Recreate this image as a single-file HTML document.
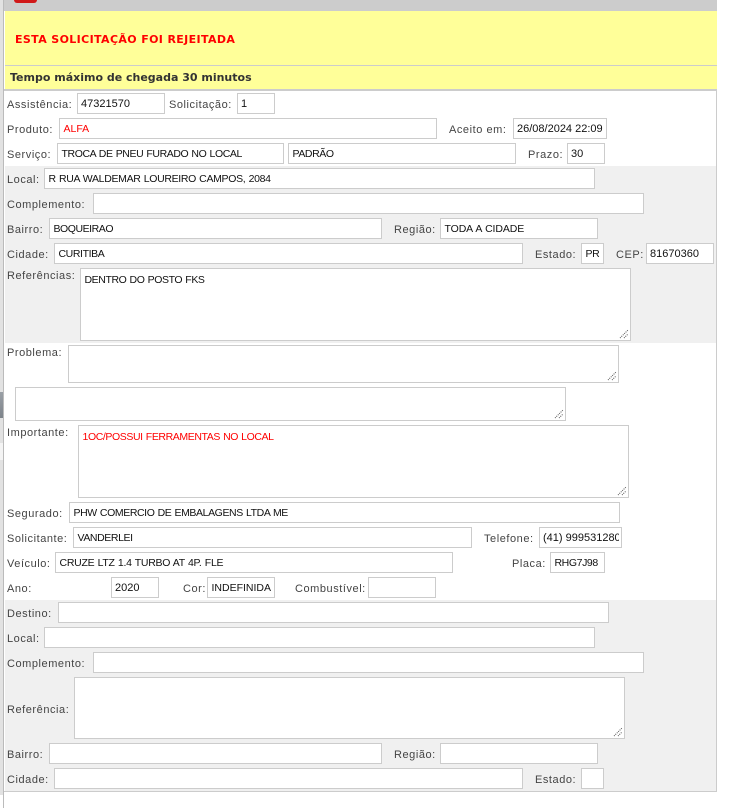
<!DOCTYPE html>
<html><head><meta charset="utf-8"><style>
html,body{margin:0;padding:0;background:#fff;width:748px;height:808px;overflow:hidden}
body{position:relative;font-family:"Liberation Sans",sans-serif;font-size:11px}
.a{position:absolute}
.l{position:absolute;color:#444;letter-spacing:.55px;line-height:14px;white-space:nowrap;margin-top:1px}
.i{position:absolute;box-sizing:border-box;background:#fff;border:1px solid #ccc;color:#111;height:21px;line-height:21px;padding-left:3px;overflow:hidden;white-space:nowrap}
.c{font-size:10.5px;letter-spacing:-.4px;word-spacing:.6px;padding-left:3.5px}
.t{line-height:14px;padding-top:4px;overflow:visible}
.r{color:#f00}
.t svg{position:absolute;right:1px;bottom:1px}
.i span{display:block;overflow:hidden}
</style></head><body>
<div class="a" style="left:0;top:0;width:3px;height:795px;background:#e2e2e2"></div>
<div class="a" style="left:0;top:443px;width:3px;height:17px;background:#f4f4f4"></div>
<div class="a" style="left:3px;top:0;width:1px;height:808px;background:#bbb"></div>
<div class="a" style="left:0;top:392px;width:3px;height:26px;background:linear-gradient(#9aa0a6,#7d838a)"></div>
<div class="a" style="left:4px;top:0;width:713px;height:11px;background:#ccc"></div>
<div class="a" style="left:14px;top:0;width:23px;height:3px;background:#d01818;border-radius:0 0 6px 6px"></div>
<div class="a" style="left:5px;top:11px;width:712px;height:54px;background:#ffff99"></div>
<div class="a" style="left:5px;top:65px;width:712px;height:1px;background:#ccc"></div>
<div class="a" style="left:5px;top:66px;width:712px;height:23px;background:#ffff99"></div>
<div class="a" style="left:4px;top:89px;width:713px;height:2px;background:#ccc"></div>
<div class="a" style="left:15px;top:33px;color:#f00;font:bold 11px/14px 'DejaVu Sans',sans-serif;letter-spacing:.37px;white-space:nowrap">ESTA SOLICITAÇÃO FOI REJEITADA</div>
<div class="a" style="left:10px;top:71px;color:#333;font:bold 11px/14px 'DejaVu Sans',sans-serif;white-space:nowrap">Tempo máximo de chegada 30 minutos</div>
<div class="a" style="left:5px;top:166px;width:711px;height:177px;background:#f0f0f0"></div>
<div class="a" style="left:5px;top:600px;width:711px;height:191px;background:#f0f0f0"></div>
<div class="a" style="left:716px;top:91px;width:1px;height:701px;background:#ccc"></div>
<div class="a" style="left:4px;top:791px;width:713px;height:1px;background:#ccc"></div>

<div class="l" style="left:7px;top:97px">Assistência:</div><div class="i" style="left:77px;top:93px;width:88px">47321570</div>
<div class="l" style="left:169px;top:97px">Solicitação:</div><div class="i" style="left:237px;top:93px;width:38px">1</div>
<div class="l" style="left:7px;top:122px">Produto:</div><div class="i r c" style="left:59px;top:118px;width:378px;letter-spacing:0">ALFA</div>
<div class="l" style="left:449px;top:122px">Aceito em:</div><div class="i" style="left:513px;top:118px;width:94px"><span style="width:86px">26/08/2024 22:09:</span></div>
<div class="l" style="left:7px;top:147px">Serviço:</div><div class="i c" style="left:57px;top:143px;width:227px">TROCA DE PNEU FURADO NO LOCAL</div><div class="i c" style="left:288px;top:143px;width:228px">PADRÃO</div>
<div class="l" style="left:528px;top:147px">Prazo:</div><div class="i" style="left:567px;top:143px;width:38px">30</div>
<div class="l" style="left:7px;top:172px">Local:</div><div class="i c" style="left:44px;top:168px;width:551px;letter-spacing:-.32px">R RUA WALDEMAR LOUREIRO CAMPOS, 2084</div>
<div class="l" style="left:7px;top:197px">Complemento:</div><div class="i" style="left:93px;top:193px;width:551px"></div>
<div class="l" style="left:7px;top:222px">Bairro:</div><div class="i c" style="left:49px;top:218px;width:333px;letter-spacing:-.45px">BOQUEIRAO</div>
<div class="l" style="left:394px;top:222px">Região:</div><div class="i c" style="left:440px;top:218px;width:158px;letter-spacing:-.1px">TODA A CIDADE</div>
<div class="l" style="left:7px;top:247px">Cidade:</div><div class="i c" style="left:54px;top:243px;width:469px">CURITIBA</div>
<div class="l" style="left:535px;top:247px">Estado:</div><div class="i c" style="left:581px;top:243px;width:23px">PR</div>
<div class="l" style="left:616px;top:247px">CEP:</div><div class="i" style="left:646px;top:243px;width:68px">81670360</div>
<div class="l" style="left:7px;top:268px">Referências:</div><div class="i t c" style="left:80px;top:268px;width:551px;height:73px">DENTRO DO POSTO FKS<svg width="10" height="10"><path d="M1 9L9 1M5 9L9 5" stroke="#555" stroke-dasharray="1 1" fill="none"/></svg></div>
<div class="l" style="left:7px;top:345px">Problema:</div><div class="i t" style="left:68px;top:345px;width:551px;height:38px"><svg width="10" height="10"><path d="M1 9L9 1M5 9L9 5" stroke="#555" stroke-dasharray="1 1" fill="none"/></svg></div>
<div class="i t" style="left:15px;top:387px;width:551px;height:34px"><svg width="10" height="10"><path d="M1 9L9 1M5 9L9 5" stroke="#555" stroke-dasharray="1 1" fill="none"/></svg></div>
<div class="l" style="left:7px;top:425px">Importante:</div><div class="i t r c" style="left:78px;top:425px;width:551px;height:73px">1OC/POSSUI FERRAMENTAS NO LOCAL<svg width="10" height="10"><path d="M1 9L9 1M5 9L9 5" stroke="#555" stroke-dasharray="1 1" fill="none"/></svg></div>
<div class="l" style="left:7px;top:506px">Segurado:</div><div class="i c" style="left:69px;top:502px;width:551px">PHW COMERCIO DE EMBALAGENS LTDA ME</div>
<div class="l" style="left:7px;top:531px">Solicitante:</div><div class="i c" style="left:73px;top:527px;width:399px">VANDERLEI</div>
<div class="l" style="left:484px;top:531px">Telefone:</div><div class="i" style="left:539px;top:527px;width:83px"><span style="width:76px">(41) 999531280</span></div>
<div class="l" style="left:7px;top:556px">Veículo:</div><div class="i c" style="left:55px;top:552px;width:398px;letter-spacing:-.27px">CRUZE LTZ 1.4 TURBO AT 4P. FLE</div>
<div class="l" style="left:512px;top:556px">Placa:</div><div class="i c" style="left:550px;top:552px;width:55px">RHG7J98</div>
<div class="l" style="left:7px;top:581px">Ano:</div><div class="i" style="left:111px;top:577px;width:48px">2020</div>
<div class="l" style="left:183px;top:581px">Cor:</div><div class="i c" style="left:207px;top:577px;width:68px;letter-spacing:0">INDEFINIDA</div>
<div class="l" style="left:295px;top:581px">Combustível:</div><div class="i" style="left:368px;top:577px;width:68px"></div>
<div class="l" style="left:7px;top:606px">Destino:</div><div class="i" style="left:58px;top:602px;width:551px"></div>
<div class="l" style="left:7px;top:631px">Local:</div><div class="i" style="left:44px;top:627px;width:551px"></div>
<div class="l" style="left:7px;top:656px">Complemento:</div><div class="i" style="left:93px;top:652px;width:551px"></div>
<div class="l" style="left:7px;top:702px">Referência:</div><div class="i t" style="left:74px;top:677px;width:551px;height:62px"><svg width="10" height="10"><path d="M1 9L9 1M5 9L9 5" stroke="#555" stroke-dasharray="1 1" fill="none"/></svg></div>
<div class="l" style="left:7px;top:747px">Bairro:</div><div class="i" style="left:49px;top:743px;width:333px"></div>
<div class="l" style="left:394px;top:747px">Região:</div><div class="i" style="left:440px;top:743px;width:158px"></div>
<div class="l" style="left:7px;top:772px">Cidade:</div><div class="i" style="left:54px;top:768px;width:469px"></div>
<div class="l" style="left:535px;top:772px">Estado:</div><div class="i" style="left:581px;top:768px;width:23px"></div>
</body></html>
